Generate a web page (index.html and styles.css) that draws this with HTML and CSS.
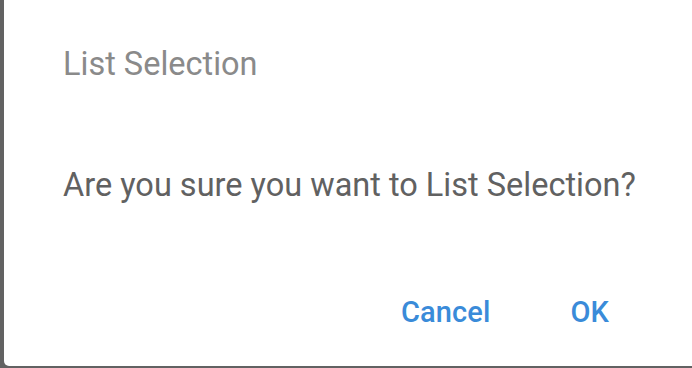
FILE: index.html
```html
<!DOCTYPE html>
<html>
<head>
<meta charset="utf-8">
<link rel="stylesheet" href="styles.css">
</head>
<body>
<div class="dialog">
  <h2 class="title">List Selection</h2>
  <p class="content">Are you sure you want to List Selection?</p>
  <div class="actions">
    <button class="btn">Cancel</button>
    <button class="btn">OK</button>
  </div>
</div>
</body>
</html>
```
FILE: styles.css
```css
html, body {
  margin: 0;
  padding: 0;
  width: 692px;
  height: 368px;
  overflow: hidden;
  background: #626262;
  font-family: Roboto, "Noto Sans", sans-serif;
}
body {
  padding: 0 0 2px 4px;
  box-sizing: border-box;
}
.dialog {
  width: 700px;
  height: 366px;
  background: #fff;
  border-radius: 0 0 0 5px;
  box-sizing: border-box;
  padding: 0 0 0 59px;
  display: flex;
  flex-direction: column;
}
.title {
  margin: 44px 0 0;
  font-size: 32.5px;
  font-weight: 400;
  line-height: 40px;
  color: #8a8a8a;
}
.content {
  margin: 81px 0 0;
  font-size: 32.5px;
  line-height: 40px;
  color: #616161;
}
.actions {
  margin: 87px 0 0;
  display: flex;
  gap: 80px;
  padding-left: 338px;
}
.btn {
  border: none;
  background: none;
  padding: 0;
  font-family: inherit;
  font-size: 29px;
  font-weight: 500;
  line-height: 40px;
  letter-spacing: 0.1px;
  color: #3a8bd9;
  cursor: pointer;
}
```
